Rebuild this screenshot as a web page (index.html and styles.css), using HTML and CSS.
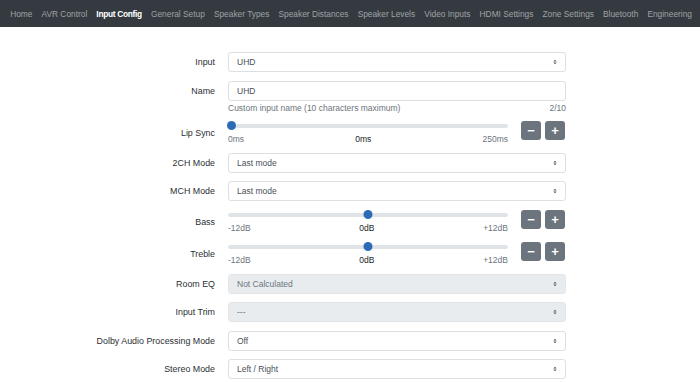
FILE: index.html
```html
<!DOCTYPE html>
<html lang="en">
<head>
  <meta charset="UTF-8" />
  <title>AVR - Input Config</title>
  <link rel="stylesheet" href="styles.css">
</head>
<body>
  <!-- Navbar -->
  <nav class="navbar">
    <a href="#">Home</a>
    <a href="#">AVR Control</a>
    <a href="#" class="active">Input Config</a>
    <a href="#">General Setup</a>
    <a href="#">Speaker Types</a>
    <a href="#">Speaker Distances</a>
    <a href="#">Speaker Levels</a>
    <a href="#">Video Inputs</a>
    <a href="#">HDMI Settings</a>
    <a href="#">Zone Settings</a>
    <a href="#">Bluetooth</a>
    <a href="#">Engineering</a>
  </nav>

  <!-- Input config form -->
  <div class="form">
    <div class="row">
      <label>Input</label>
      <div class="select">UHD<svg class="caret" viewBox="0 0 6 8"><path d="M3 0.5 L5.5 3.2 H0.5 Z M3 7.5 L5.5 4.8 H0.5 Z"/></svg></div>
    </div>

    <div class="row row-name">
      <label>Name</label>
      <div class="input">UHD</div>
    </div>
    <div class="help">
      <span>Custom input name (10 characters maximum)</span>
      <span>2/10</span>
    </div>

    <div class="row row-slider">
      <label>Lip Sync</label>
      <div class="slider-wrap">
        <div class="slider">
          <div class="track"><span class="thumb start" style="left: 0%"></span></div>
          <div class="scale"><span>0ms</span><span class="value">0ms</span><span>250ms</span></div>
        </div>
        <div class="buttons"><button>&minus;</button><button>+</button></div>
      </div>
    </div>

    <div class="row">
      <label>2CH Mode</label>
      <div class="select">Last mode<svg class="caret" viewBox="0 0 6 8"><path d="M3 0.5 L5.5 3.2 H0.5 Z M3 7.5 L5.5 4.8 H0.5 Z"/></svg></div>
    </div>

    <div class="row">
      <label>MCH Mode</label>
      <div class="select">Last mode<svg class="caret" viewBox="0 0 6 8"><path d="M3 0.5 L5.5 3.2 H0.5 Z M3 7.5 L5.5 4.8 H0.5 Z"/></svg></div>
    </div>

    <div class="row row-slider">
      <label>Bass</label>
      <div class="slider-wrap">
        <div class="slider">
          <div class="track"><span class="thumb" style="left: 50%"></span></div>
          <div class="scale"><span>-12dB</span><span class="value">0dB</span><span>+12dB</span></div>
        </div>
        <div class="buttons"><button>&minus;</button><button>+</button></div>
      </div>
    </div>

    <div class="row row-slider">
      <label>Treble</label>
      <div class="slider-wrap">
        <div class="slider">
          <div class="track"><span class="thumb" style="left: 50%"></span></div>
          <div class="scale"><span>-12dB</span><span class="value">0dB</span><span>+12dB</span></div>
        </div>
        <div class="buttons"><button>&minus;</button><button>+</button></div>
      </div>
    </div>

    <div class="row">
      <label>Room EQ</label>
      <div class="select disabled">Not Calculated<svg class="caret" viewBox="0 0 6 8"><path d="M3 0.5 L5.5 3.2 H0.5 Z M3 7.5 L5.5 4.8 H0.5 Z"/></svg></div>
    </div>

    <div class="row">
      <label>Input Trim</label>
      <div class="select disabled">---<svg class="caret" viewBox="0 0 6 8"><path d="M3 0.5 L5.5 3.2 H0.5 Z M3 7.5 L5.5 4.8 H0.5 Z"/></svg></div>
    </div>

    <div class="row">
      <label>Dolby Audio Processing Mode</label>
      <div class="select">Off<svg class="caret" viewBox="0 0 6 8"><path d="M3 0.5 L5.5 3.2 H0.5 Z M3 7.5 L5.5 4.8 H0.5 Z"/></svg></div>
    </div>

    <div class="row">
      <label>Stereo Mode</label>
      <div class="select">Left / Right<svg class="caret" viewBox="0 0 6 8"><path d="M3 0.5 L5.5 3.2 H0.5 Z M3 7.5 L5.5 4.8 H0.5 Z"/></svg></div>
    </div>
  </div>
</body>
</html>
```

FILE: styles.css
```css
/* Base */
body {
  font-family: 'Liberation Sans', Arial, sans-serif;
  font-size: 8.5px;
  color: #212529;
  background: #ffffff;
  margin: 0;
  padding: 0;
}

/* Navbar */
.navbar {
  background-color: #343a40; /* dark grey */
  height: 27px;
  display: flex;
  align-items: center;
  padding: 0 4px 0 5.6px;
  font-size: 8.35px;
}

.navbar a {
  color: #9fa2a5;
  text-decoration: none;
  padding: 0 4.55px;
  white-space: nowrap;
}

.navbar a.active {
  color: #ffffff;
  font-weight: 700;
  letter-spacing: -0.3px;
}

/* Form */
.form {
  width: 566px;
  padding-top: 25px;
}

.row {
  display: grid;
  grid-template-columns: 215px 338px;
  column-gap: 13px;
  align-items: center;
  margin-bottom: 8.5px;
}

.row label {
  text-align: right;
  font-size: 8.9px;
  color: #2b2f33;
}

.row-name {
  margin-bottom: 0;
}

.select,
.input {
  height: 20px;
  box-sizing: border-box;
  border: 1px solid #dcdfe3;
  border-radius: 3px;
  background: #ffffff;
  color: #495057;
  padding: 0 8px;
  display: flex;
  align-items: center;
  justify-content: space-between;
}

.select.disabled {
  background: #e9ecef;
  border-color: #e3e6e9;
  color: #6c757d;
}

.caret {
  width: 4px;
  height: 6px;
  fill: #555b61;
}

/* Help text under name */
.help {
  margin-left: 228px;
  display: flex;
  justify-content: space-between;
  color: #6c757d;
  height: 12px;
  line-height: 12px;
  margin-top: 1px;
  margin-bottom: 7px;
}

/* Sliders */
.row-slider {
  margin-bottom: 8px;
}

.slider-wrap {
  display: flex;
  align-items: flex-start;
  gap: 13px;
}

.slider {
  width: 280px;
}

.track {
  position: relative;
  height: 4px;
  margin: 3px 0 6px;
  background: #e1e4e7;
  border-radius: 2px;
}

.thumb {
  position: absolute;
  top: 50%;
  width: 9px;
  height: 9px;
  margin-top: -4.5px;
  border-radius: 50%;
  background: #2d6cb5;
  transform: translateX(-4.5px);
}

.thumb.start {
  transform: translateX(-1px);
}

.scale {
  display: flex;
  justify-content: space-between;
  color: #6c757d;
  line-height: 11px;
}

.scale .value {
  color: #212529;
}

.buttons {
  display: flex;
  gap: 4px;
}

.buttons button {
  width: 20px;
  height: 19px;
  padding: 0;
  border: none;
  border-radius: 3px;
  background: #6c757d;
  color: #ffffff;
  font-family: 'Liberation Sans', Arial, sans-serif;
  font-size: 13px;
  font-weight: 700;
  line-height: 19px;
}
```
